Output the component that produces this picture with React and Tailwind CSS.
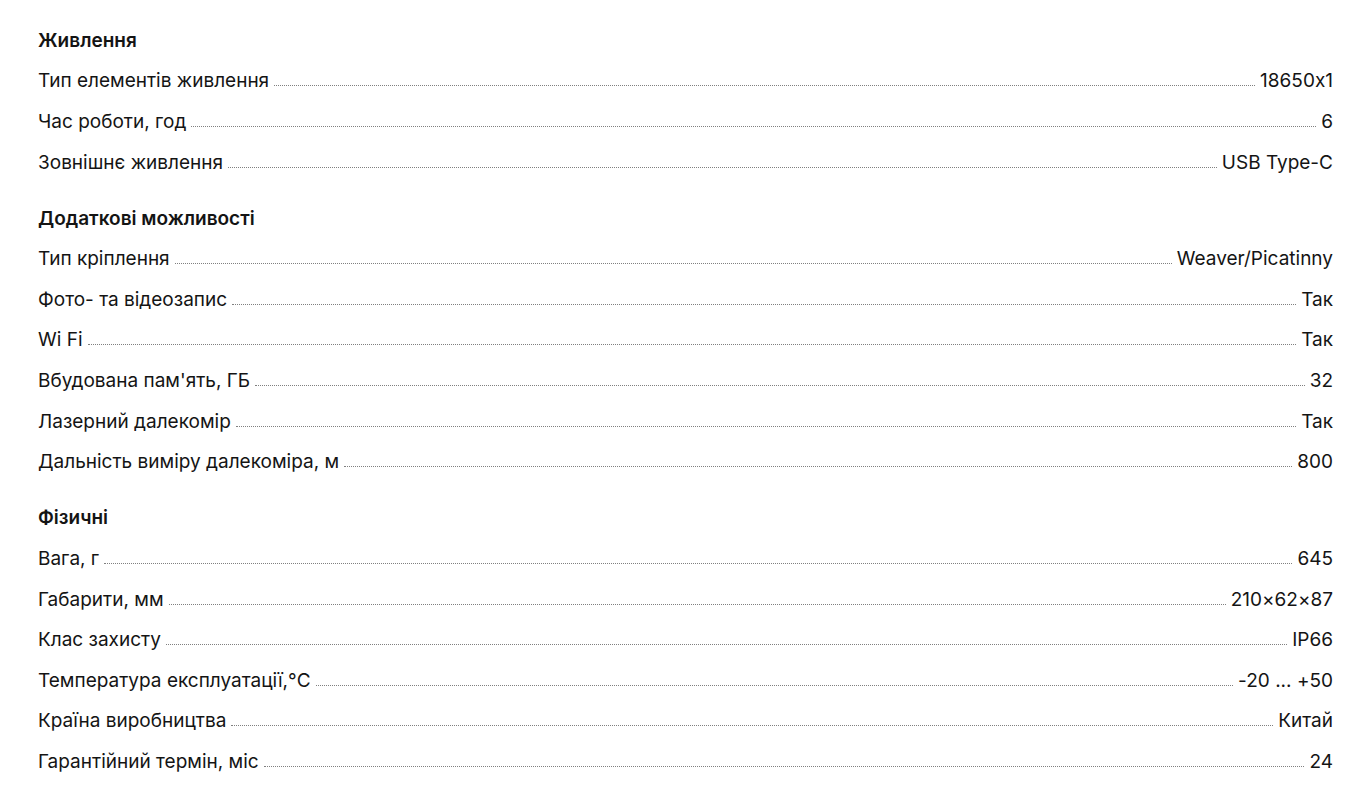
import React from 'react';

const specs = [
    {
        title: 'Живлення',
        rows: [
            ['Тип елементів живлення', '18650x1'],
            ['Час роботи, год', '6'],
            ['Зовнішнє живлення', 'USB Type-C'],
        ],
    },
    {
        title: 'Додаткові можливості',
        rows: [
            ['Тип кріплення', 'Weaver/Picatinny'],
            ['Фото- та відеозапис', 'Так'],
            ['Wi Fi', 'Так'],
            ["Вбудована пам'ять, ГБ", '32'],
            ['Лазерний далекомір', 'Так'],
            ['Дальність виміру далекоміра, м', '800'],
        ],
    },
    {
        title: 'Фізичні',
        rows: [
            ['Вага, г', '645'],
            ['Габарити, мм', '210×62×87'],
            ['Клас захисту', 'IP66'],
            ['Температура експлуатації,°C', '-20 ... +50'],
            ['Країна виробництва', 'Китай'],
            ['Гарантійний термін, міс', '24'],
        ],
    },
];

const SpecRow = ({ label, value }) => (
    <div className="flex items-center h-[40.6px]">
        <div className="flex items-baseline w-full">
            <span className="whitespace-nowrap">{label}</span>
            <div className="flex-1 mx-[5px] border-b border-dotted border-[#808080] relative top-[-1px]" />
            <span className="whitespace-nowrap">{value}</span>
        </div>
    </div>
);

export default function App() {
    return (
        <div
            className="bg-white text-[#141414] text-[19px] leading-[27px] pl-[38px] pr-[33px] pt-[0.5px] pb-[16px] [font-feature-settings:'calt'_0]"
            style={{ fontFamily: 'Inter, "Noto Sans", sans-serif' }}
        >
            {specs.map((section, i) => (
                <div key={section.title} className={i > 0 ? 'mt-[15.5px]' : 'mt-[19.5px]'}>
                    <div className="h-[40.6px] flex items-center font-semibold">{section.title}</div>
                    {section.rows.map(([label, value]) => (
                        <SpecRow key={label} label={label} value={value} />
                    ))}
                </div>
            ))}
        </div>
    );
}
